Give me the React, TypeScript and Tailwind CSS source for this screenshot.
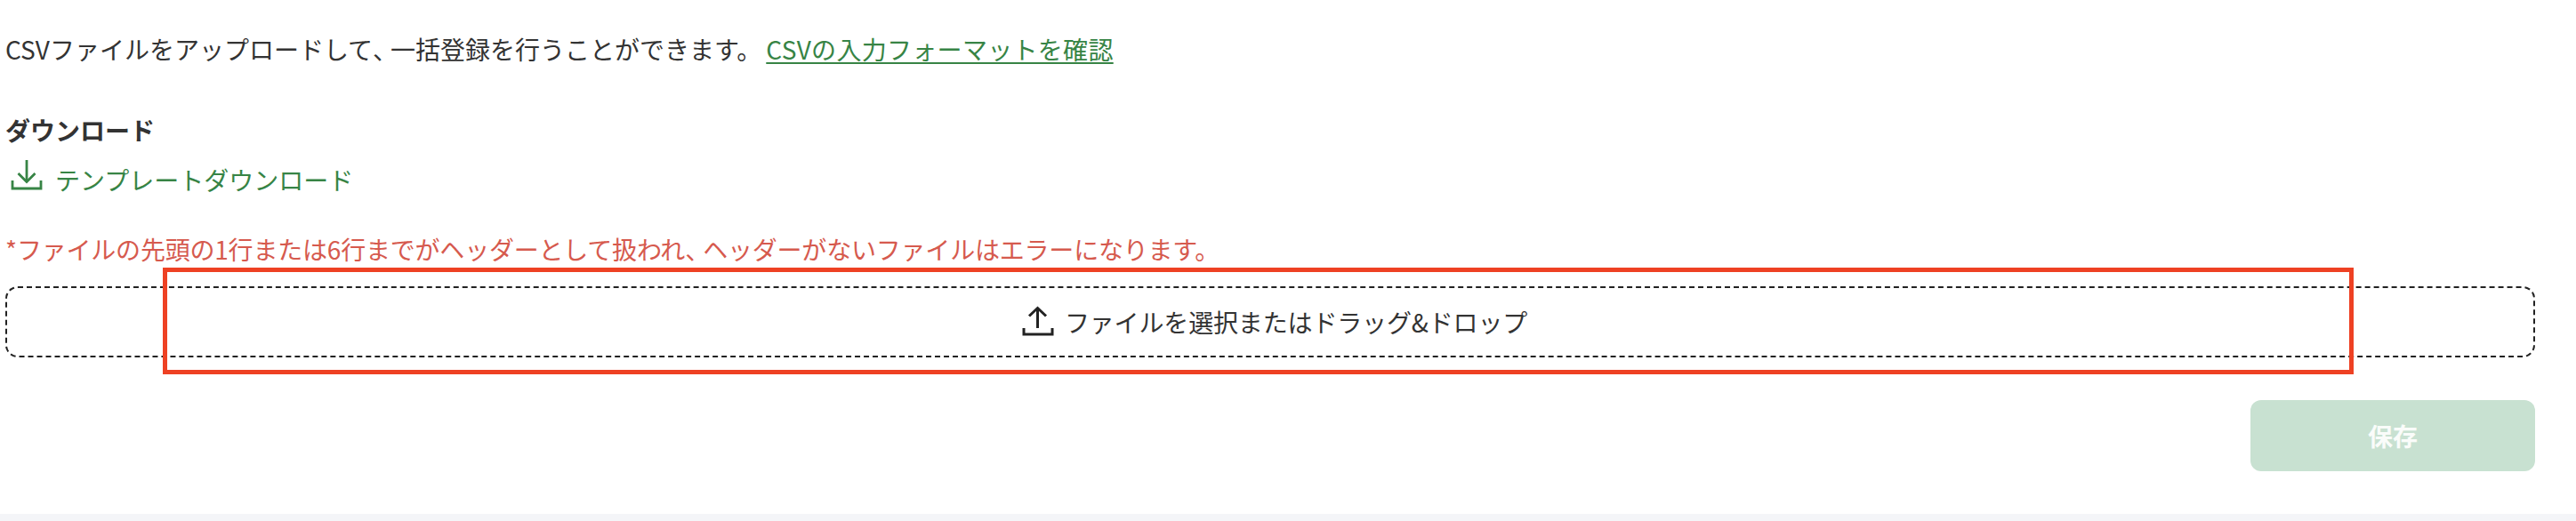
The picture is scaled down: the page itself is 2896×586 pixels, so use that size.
const FONT = "font-['Noto_Sans_CJK_JP','Liberation_Sans',sans-serif]";

const DownloadIcon = () => (
  <svg width="36" height="36" viewBox="0 0 36 36" fill="none" stroke="currentColor" strokeWidth="2.8" className="-mt-[11px] shrink-0">
    <path d="M2 24V33H34V24" />
    <path d="M18 1V25" />
    <path d="M8.5 16L18 25.5L27.5 16" />
  </svg>
);

const UploadIcon = () => (
  <svg width="36" height="36" viewBox="0 0 36 36" fill="none" stroke="#222" strokeWidth="3" className="shrink-0">
    <path d="M2 25V32H34V25" />
    <path d="M17.5 3V25" />
    <path d="M8 11.5L17.5 2.5L27 11.5" />
  </svg>
);

export default function App() {
  return (
    <div className={`relative flex h-[586px] w-[2896px] flex-col bg-white text-[28px] text-[#333] ${FONT}`}>
      <div className="flex flex-1 flex-col px-[6px] pt-[35px]">
        {/* 説明 */}
        <p className="h-[40px] leading-[40px]">
          CSVファイルをアップロードして<span className="tracking-[-8px]">、</span>一括登録を行うことができます。
          <a className="ml-[5px] tracking-[0.3px] text-[#378445] underline decoration-2 underline-offset-[3px]">
            CSVの入力フォーマットを確認
          </a>
        </p>

        {/* ダウンロード */}
        <h2 className="mt-[51px] h-[40px] font-bold leading-[40px]">ダウンロード</h2>
        <div className="mt-[16px] flex h-[40px] items-center gap-[14px] pl-[6px] text-[#378445]">
          <DownloadIcon />
          <span className="leading-[40px]">テンプレートダウンロード</span>
        </div>

        {/* エラー注記 */}
        <p className="mt-[38px] h-[40px] leading-[40px] tracking-[-0.2px] text-[#d65a4e]">
          *ファイルの先頭の1行または6行までがヘッダーとして扱われ<span className="tracking-[-8px]">、</span>ヘッダーがないファイルはエラーになります。
        </p>

        {/* アップロード領域 */}
        <div className="mt-[22px] flex h-[80px] w-[2844px] items-center justify-center gap-[12px] rounded-[14px] border-2 border-dashed border-[#222] pl-[10px]">
          <UploadIcon />
          <span className="leading-[40px] tracking-[-0.15px]">ファイルを選択またはドラッグ&ドロップ</span>
        </div>

        <div className="mt-[48px] flex w-[2844px] justify-end">
          <button className="h-[80px] w-[320px] rounded-[12px] bg-[#c8e1d1] font-bold text-white/90">保存</button>
        </div>
      </div>

      <div className="h-[8px] bg-[#f4f5f8]" />

      {/* 注釈の赤枠 */}
      <div className="absolute left-[183px] top-[301px] h-[120px] w-[2463px] border-[5px] border-[#ee4123]" />
    </div>
  );
}
